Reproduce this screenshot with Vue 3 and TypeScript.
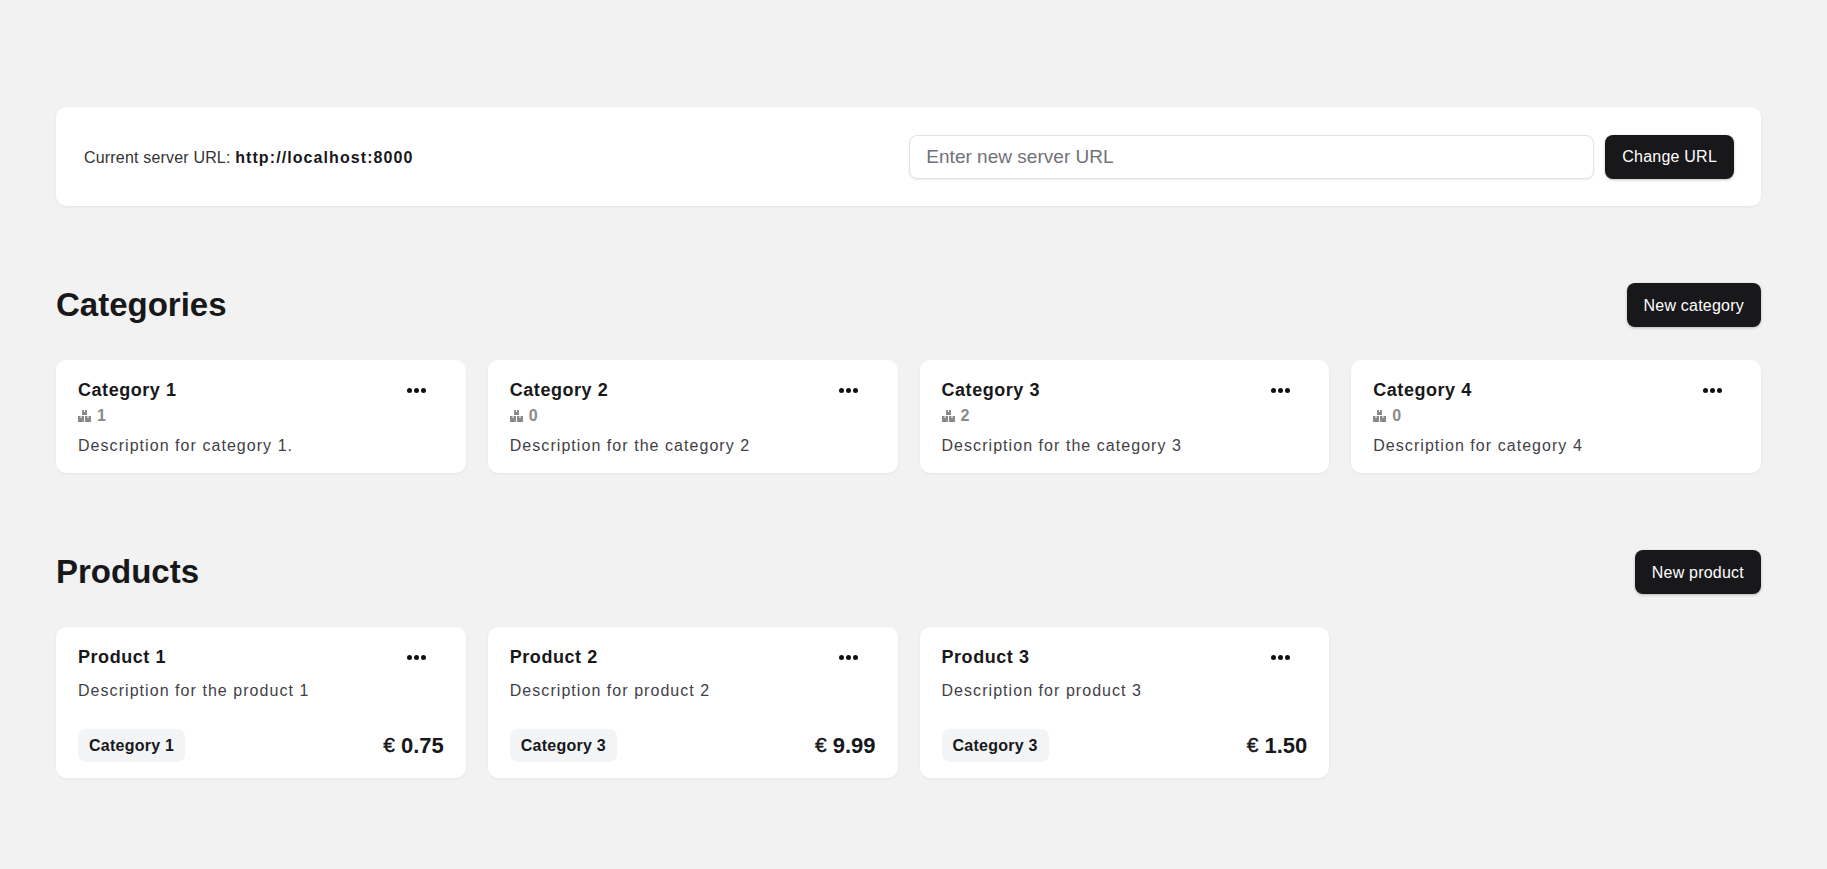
<template>
  <div class="page">
    <section class="server">
      <p class="serverText">Current server URL: <strong>{{ serverUrl }}</strong></p>
      <form class="serverForm" @submit.prevent>
        <input class="serverInput" type="text" placeholder="Enter new server URL">
        <button class="btn" type="submit">Change URL</button>
      </form>
    </section>

    <section class="block">
      <header class="blockHead">
        <h2>Categories</h2>
        <button class="btn" type="button">New category</button>
      </header>
      <div class="grid">
        <article v-for="c in categories" :key="c.name" class="card catCard">
          <div class="cardTop">
            <h3>{{ c.name }}</h3>
            <span class="dots"><i /><i /><i /></span>
          </div>
          <div class="count">
            <svg width="13" height="12" viewBox="0 0 13 12" fill="#8a8a8a">
              <path d="M4 0h2v2h1V0h2v5H4zM0 6h2.5v2h1V6H6v6H0zM7 6h2.5v2h1V6H13v6H7z" />
            </svg>
            <span>{{ c.count }}</span>
          </div>
          <p class="desc">{{ c.description }}</p>
        </article>
      </div>
    </section>

    <section class="block">
      <header class="blockHead">
        <h2>Products</h2>
        <button class="btn" type="button">New product</button>
      </header>
      <div class="grid">
        <article v-for="p in products" :key="p.name" class="card prodCard">
          <div class="cardTop">
            <h3>{{ p.name }}</h3>
            <span class="dots"><i /><i /><i /></span>
          </div>
          <p class="desc prodDesc">{{ p.description }}</p>
          <div class="prodFoot">
            <span class="tag">{{ p.category }}</span>
            <span class="price"><small>€</small>{{ p.price }}</span>
          </div>
        </article>
      </div>
    </section>
  </div>
</template>

<script setup lang="ts">
const serverUrl = 'http://localhost:8000';

const categories = [
  { name: 'Category 1', count: 1, description: 'Description for category 1.' },
  { name: 'Category 2', count: 0, description: 'Description for the category 2' },
  { name: 'Category 3', count: 2, description: 'Description for the category 3' },
  { name: 'Category 4', count: 0, description: 'Description for category 4' },
];

const products = [
  { name: 'Product 1', description: 'Description for the product 1', category: 'Category 1', price: '0.75' },
  { name: 'Product 2', description: 'Description for product 2', category: 'Category 3', price: '9.99' },
  { name: 'Product 3', description: 'Description for product 3', category: 'Category 3', price: '1.50' },
];
</script>

<style>
html,
body {
  margin: 0;
  background: #f2f2f2;
}
</style>

<style scoped>
.page {
  min-height: 869px;
  box-sizing: border-box;
  padding: 107px 66px 0 56px;
  font-family: "Liberation Sans", Arial, sans-serif;
  color: #18181b;
}

.server {
  display: flex;
  align-items: center;
  justify-content: space-between;
  height: 99px;
  box-sizing: border-box;
  padding: 0 27px 0 28px;
  border-radius: 10px;
  background: #fff;
  box-shadow: 0 1px 3px rgba(0, 0, 0, 0.06);
}

.serverText {
  margin: 2px 0 0;
  font-size: 16px;
  letter-spacing: 0.18px;
  color: #333;
}

.serverText strong {
  letter-spacing: 1.08px;
  color: #18181b;
}

.serverForm {
  display: flex;
  gap: 11px;
}

.serverInput {
  width: 685px;
  height: 44px;
  box-sizing: border-box;
  padding: 0 16px;
  border: 1px solid #e2e2e4;
  border-radius: 8px;
  outline: none;
  font-family: inherit;
  font-size: 19px;
  letter-spacing: 0.02px;
  box-shadow: 0 1px 2px rgba(0, 0, 0, 0.08);
}

.serverInput::placeholder {
  color: #71717a;
}

.btn {
  height: 44px;
  padding: 1px 17px 0;
  border: 0;
  border-radius: 8px;
  background: #18181b;
  font-family: inherit;
  font-size: 16px;
  letter-spacing: 0.22px;
  color: #fff;
  box-shadow: 0 1px 3px rgba(0, 0, 0, 0.25);
}

.block {
  margin-top: 77px;
}

.blockHead {
  display: flex;
  align-items: center;
  justify-content: space-between;
  height: 44px;
  margin-bottom: 33px;
}

h2 {
  margin: 0;
  font-size: 33px;
  font-weight: 700;
  color: #18181b;
}

.grid {
  display: grid;
  grid-template-columns: repeat(4, 1fr);
  gap: 22px;
}

.card {
  box-sizing: border-box;
  padding: 18px 22px 16px;
  border-radius: 10px;
  background: #fff;
  box-shadow: 0 1px 3px rgba(0, 0, 0, 0.06);
}

.catCard {
  height: 113px;
}

.prodCard {
  display: flex;
  flex-direction: column;
  height: 151px;
}

.cardTop {
  display: flex;
  align-items: center;
  justify-content: space-between;
  height: 24px;
  padding-right: 17.5px;
}

h3 {
  margin: 0;
  font-size: 18px;
  font-weight: 700;
  letter-spacing: 0.55px;
  color: #18181b;
}

.dots {
  display: flex;
  gap: 2px;
}

.dots i {
  width: 5px;
  height: 5px;
  border-radius: 50%;
  background: #111;
}

.count {
  display: flex;
  align-items: center;
  gap: 6px;
  height: 20px;
  margin-top: 4px;
  font-size: 16px;
  font-weight: 700;
  color: #8a8a8a;
}

.desc {
  margin: 8px 0 0;
  font-size: 16px;
  line-height: 24px;
  letter-spacing: 1.05px;
  color: #3f3f46;
}

.prodDesc {
  margin-top: 10px;
}

.prodFoot {
  display: flex;
  align-items: center;
  justify-content: space-between;
  margin-top: auto;
}

.tag {
  padding: 8px 11px;
  border-radius: 8px;
  background: #f3f4f6;
  font-size: 16px;
  font-weight: 700;
  line-height: 17px;
  letter-spacing: 0.25px;
}

.price {
  font-size: 22px;
  font-weight: 700;
}

.price small {
  margin-right: 6px;
  font-size: 21px;
  font-weight: 400;
  vertical-align: 1px;
  -webkit-text-stroke: 0.4px;
}
</style>
